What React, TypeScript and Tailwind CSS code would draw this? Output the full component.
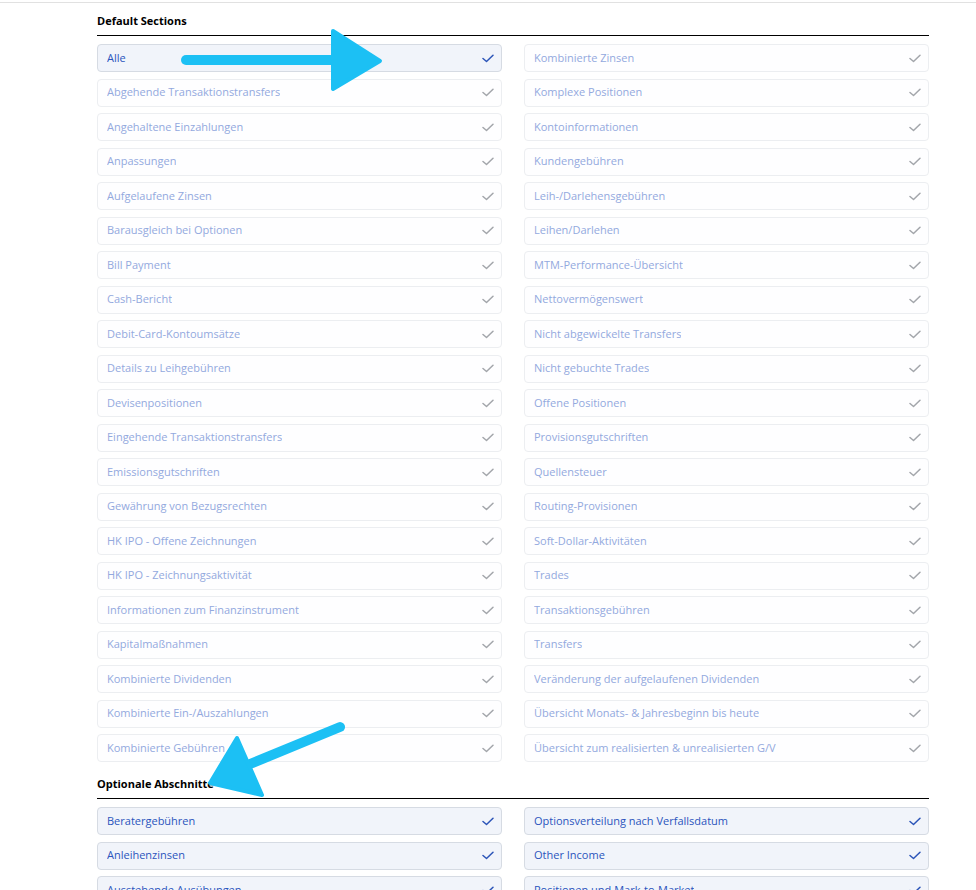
import React from 'react';

const defaultLeft = [
  'Alle',
  'Abgehende Transaktionstransfers',
  'Angehaltene Einzahlungen',
  'Anpassungen',
  'Aufgelaufene Zinsen',
  'Barausgleich bei Optionen',
  'Bill Payment',
  'Cash-Bericht',
  'Debit-Card-Kontoumsätze',
  'Details zu Leihgebühren',
  'Devisenpositionen',
  'Eingehende Transaktionstransfers',
  'Emissionsgutschriften',
  'Gewährung von Bezugsrechten',
  'HK IPO - Offene Zeichnungen',
  'HK IPO - Zeichnungsaktivität',
  'Informationen zum Finanzinstrument',
  'Kapitalmaßnahmen',
  'Kombinierte Dividenden',
  'Kombinierte Ein-/Auszahlungen',
  'Kombinierte Gebühren',
];

const defaultRight = [
  'Kombinierte Zinsen',
  'Komplexe Positionen',
  'Kontoinformationen',
  'Kundengebühren',
  'Leih-/Darlehensgebühren',
  'Leihen/Darlehen',
  'MTM-Performance-Übersicht',
  'Nettovermögenswert',
  'Nicht abgewickelte Transfers',
  'Nicht gebuchte Trades',
  'Offene Positionen',
  'Provisionsgutschriften',
  'Quellensteuer',
  'Routing-Provisionen',
  'Soft-Dollar-Aktivitäten',
  'Trades',
  'Transaktionsgebühren',
  'Transfers',
  'Veränderung der aufgelaufenen Dividenden',
  'Übersicht Monats- & Jahresbeginn bis heute',
  'Übersicht zum realisierten & unrealisierten G/V',
];

const optionalLeft = ['Beratergebühren', 'Anleihenzinsen', 'Ausstehende Ausübungen'];
const optionalRight = ['Optionsverteilung nach Verfallsdatum', 'Other Income', 'Positionen und Mark-to-Market'];

// interleave two columns into grid order
function zip(left: string[], right: string[]) {
  const out: { label: string; key: string }[] = [];
  left.forEach((l, i) => {
    out.push({ label: l, key: 'l' + i });
    if (right[i]) out.push({ label: right[i], key: 'r' + i });
  });
  return out;
}

function Check({ active }: { active: boolean }) {
  return (
    <svg width="12" height="9" viewBox="0 0 12 9" fill="none">
      <polyline
        points="1,4.5 4.5,7.5 11,1.2"
        stroke={active ? '#2c55b8' : '#a3a6ab'}
        strokeWidth="1.5"
        strokeLinecap="round"
        strokeLinejoin="round"
      />
    </svg>
  );
}

function Row({ label, active }: { label: string; active: boolean }) {
  return (
    <div
      className={`h-[28px] flex items-center justify-between pl-[9px] pr-[7px] rounded-[4px] border text-[11px] ${
        active ? 'bg-[#f1f4fa] border-[#d6dbe3] text-[#2b55bd]' : 'bg-[#fefeff] border-[#eceef1] text-[#93a9de]'
      }`}
    >
      <span className="truncate">{label}</span>
      <Check active={active} />
    </div>
  );
}

function SectionHeader({ title }: { title: string }) {
  return (
    <div className="pb-[7px] border-b border-black text-[11px] leading-[14px] font-bold text-black">{title}</div>
  );
}

export default function App() {
  const defaults = zip(defaultLeft, defaultRight);
  const optional = zip(optionalLeft, optionalRight);

  return (
    <div className="relative h-[890px] overflow-hidden bg-white" style={{ fontFamily: '"Open Sans", Arial, sans-serif' }}>
      <div className="mt-[2px] border-t border-[#e1e1e1]">
        <div className="ml-[97px] w-[832px] pt-[11px]">
          <SectionHeader title="Default Sections" />
          <div className="mt-[8px] grid grid-cols-2 gap-x-[22px] gap-y-[6.5px]">
            {defaults.map(r => (
              <Row key={r.key} label={r.label} active={r.label === 'Alle'} />
            ))}
          </div>

          <div className="mt-[15px]">
            <SectionHeader title="Optionale Abschnitte" />
          </div>
          <div className="mt-[8px] grid grid-cols-2 gap-x-[22px] gap-y-[6.5px]">
            {optional.map(r => (
              <Row key={r.key} label={r.label} active />
            ))}
          </div>
        </div>
      </div>

      {/* marker arrows drawn over the list */}
      <svg className="absolute inset-0 pointer-events-none" width="976" height="890" viewBox="0 0 976 890">
        <g fill="#1cc0f4" stroke="#1cc0f4" strokeLinejoin="round" strokeLinecap="round">
          <line x1="186" y1="60" x2="338" y2="60" strokeWidth="10" />
          <polygon points="333,31 380,61 333,89" strokeWidth="4" />
          <line x1="340" y1="727" x2="250" y2="764" strokeWidth="10" />
          <polygon points="237,738 262,795 210,783" strokeWidth="4" />
        </g>
      </svg>
    </div>
  );
}
